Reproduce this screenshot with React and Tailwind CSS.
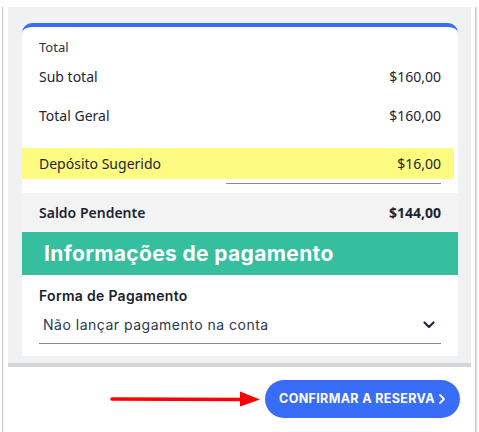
import React from 'react';

const rows = [
  { label: 'Sub total', value: '$160,00' },
  { label: 'Total Geral', value: '$160,00' },
];

const App = () => {
  return (
    <div className="w-[479px] h-[432px] bg-white overflow-hidden" style={{ fontFamily: '"Noto Sans", sans-serif' }}>
      <div className="ml-[2px] w-[474px] h-[428px] border-l border-r border-b border-[#c4c4c4] shadow-[1px_1px_2px_rgba(0,0,0,0.15)]">
        <div className="ml-[5px] mt-[7px] w-[463px] bg-[#f0f1f3] pt-[16px] pl-[14px] pb-[7px] border-b-4 border-[#d3d4d6]">
          <div className="w-[436px] bg-white rounded-t-[10px] border-t-4 border-[#3a6df7]">
            <div className="px-[17px] pt-[10px] text-[13px] leading-[20px] text-[#2b3445]">Total</div>

            {rows.map((row, i) => (
              <div
                key={row.label}
                className={`flex justify-between px-[17px] text-[14px] leading-[20px] text-[#1d2433] ${i === 0 ? 'mt-[10px]' : 'mt-[19px]'}`}
              >
                <span>{row.label}</span>
                <span>{row.value}</span>
              </div>
            ))}

            <div className="mt-[22px] mr-[4px] h-[31px] bg-[#fdfc80] flex items-center justify-between pl-[17px] pr-[13px] text-[14px] text-[#1d2433]">
              <span>Depósito Sugerido</span>
              <span>$16,00</span>
            </div>
            <div className="flex justify-end pr-[17px] pt-[4px]">
              <div className="w-[215px] h-px bg-[#8a8a8a]"></div>
            </div>

            <div className="mt-[9px] h-[39px] bg-[#f3f3f3] flex items-center justify-between px-[17px] text-[14px] text-[#1d2433]">
              <span className="font-semibold">Saldo Pendente</span>
              <span className="font-bold">$144,00</span>
            </div>

            <div className="h-[43px] bg-[#35bf9f] flex items-center pl-[22px]">
              <h3 className="text-white font-bold text-[21px] tracking-[0.35px]" style={{ fontFamily: 'Inter, sans-serif' }}>
                Informações de pagamento
              </h3>
            </div>

            <div className="px-[17px] pb-[12px]" style={{ fontFamily: 'Inter, sans-serif' }}>
              <label className="block mt-[12px] text-[14px] leading-[18px] font-semibold text-[#1a1f2c] tracking-[0.3px]">
                Forma de Pagamento
              </label>
              <div className="mt-[11px] flex items-center justify-between border-b border-[#8a8a8a] pb-[9px] pl-[4px] pr-[6px]">
                <span className="text-[14px] leading-[18px] text-[#2c3850] tracking-[0.5px]">Não lançar pagamento na conta</span>
                <svg width="12" height="8" viewBox="0 0 12 8" fill="none">
                  <path d="M1.5 1.5 L6 6 L10.5 1.5" stroke="#1f2a44" strokeWidth="2.2" strokeLinecap="round" strokeLinejoin="round" />
                </svg>
              </div>
            </div>
          </div>
        </div>

        <div className="flex items-center justify-end pr-[15px] mt-[13px] gap-[5px]">
          <svg width="150" height="16" viewBox="0 0 150 16">
            <line x1="2" y1="8" x2="134" y2="8.5" stroke="#f00" strokeWidth="3.5" strokeLinecap="round" />
            <polygon points="130,0.5 150,8.5 130,15.5" fill="#f00" />
          </svg>
          <button className="h-[38px] w-[195px] rounded-full bg-[#3a6df7] text-white text-[12.5px] font-bold flex items-center justify-center gap-[3px] tracking-[0.35px]" style={{ fontFamily: 'Inter, sans-serif' }}>
            CONFIRMAR A RESERVA
            <svg width="8" height="12" viewBox="0 0 8 12" fill="none">
              <path d="M2 2 L6 6 L2 10" stroke="white" strokeWidth="1.8" strokeLinecap="round" strokeLinejoin="round" />
            </svg>
          </button>
        </div>
      </div>
    </div>
  );
};

export default App;
